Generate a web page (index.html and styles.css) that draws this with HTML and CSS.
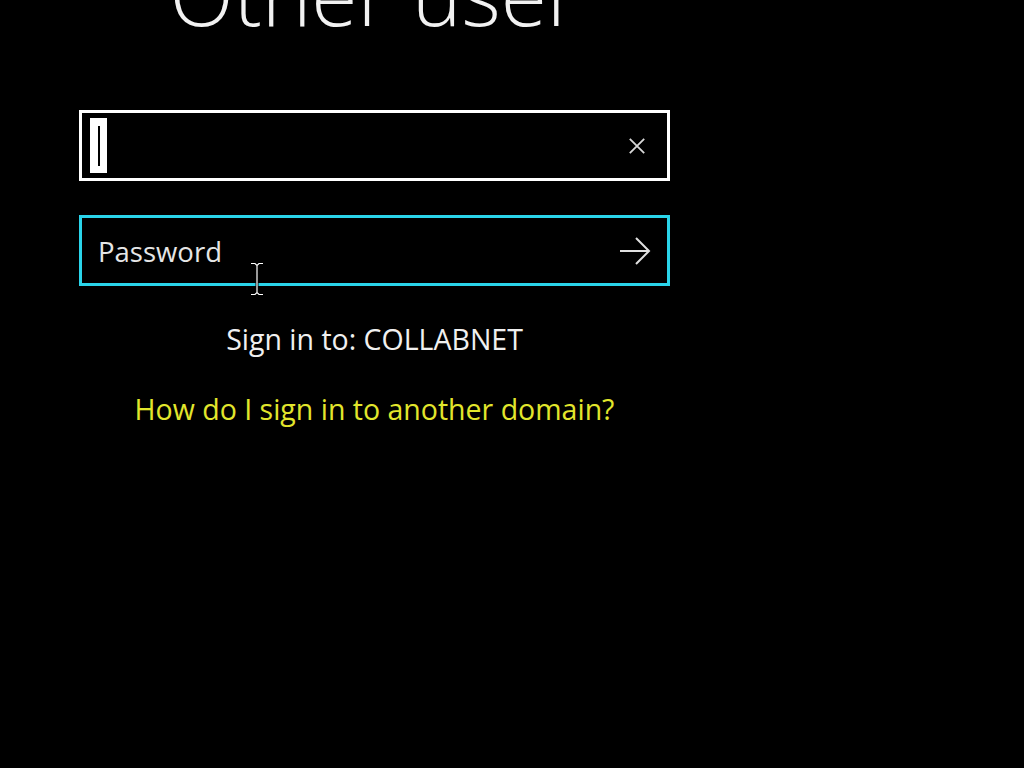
FILE: index.html
```html
<!DOCTYPE html>
<html lang="en">
<head>
  <meta charset="UTF-8" />
  <title>Other user</title>
  <link rel="stylesheet" href="styles.css">
</head>
<body>

  <div class="panel">
    <h1 class="title">Other user</h1>

    <div class="field user-field">
      <span class="caret"><span class="caret-line"></span></span>
      <svg class="clear-icon" width="20" height="20" viewBox="0 0 20 20">
        <path d="M2 2 L18 18 M18 2 L2 18" stroke="#d8d8d8" stroke-width="2" fill="none"/>
      </svg>
    </div>

    <div class="field pass-field">
      <span class="placeholder">Password</span>
      <svg class="submit-icon" width="32" height="30" viewBox="0 0 32 30">
        <path d="M1 15 L30 15 M17 2 L30 15 L17 28" stroke="#e0e0e0" stroke-width="2" fill="none"/>
      </svg>
    </div>

    <div class="domain">Sign in to: COLLABNET</div>
    <a class="help" href="#">How do I sign in to another domain?</a>
  </div>

  <svg class="mouse" width="16" height="34" viewBox="0 0 16 34">
    <path d="M2 1.5 H6 L8 3.5 L10 1.5 H14 M8 3.5 V30.5 M2 32.5 H6 L8 30.5 L10 32.5 H14" stroke="#000" stroke-width="3" fill="none"/>
    <path d="M2 1.5 H6 L8 3.5 L10 1.5 H14 M8 3.5 V30.5 M2 32.5 H6 L8 30.5 L10 32.5 H14" stroke="#fff" stroke-width="1.2" fill="none"/>
  </svg>

</body>
</html>
```

FILE: styles.css
```css
* {
  margin: 0;
  padding: 0;
  box-sizing: border-box;
}

body {
  background: #000;
  color: #fff;
  font-family: 'Open Sans', 'Noto Sans', sans-serif;
  width: 1024px;
  height: 768px;
  overflow: hidden;
  position: relative;
}

.panel {
  width: 591px;
  margin-left: 79px;
  display: flex;
  flex-direction: column;
  align-items: center;
}

.title {
  font-size: 84px;
  font-weight: 300;
  line-height: 84px;
  height: 84px;
  margin-top: -48px;
  margin-bottom: 74px;
  color: #f2f2f2;
  white-space: nowrap;
}

.field {
  width: 100%;
  height: 71px;
  border: 3px solid #fff;
  display: flex;
  align-items: center;
  justify-content: space-between;
  padding: 0 21px 0 8px;
}

.user-field {
  align-items: flex-start;
  padding-top: 5px;
}

.caret {
  width: 17px;
  height: 55px;
  background: #fff;
  display: flex;
  align-items: center;
  justify-content: center;
}

.caret-line {
  width: 2px;
  height: 40px;
  background: #000;
}

.clear-icon {
  width: 18px;
  height: 18px;
  margin-top: 19px;
}

.pass-field {
  margin-top: 34px;
  border-color: #2ad4ea;
  padding: 0 16px 0 16px;
}

.placeholder {
  font-size: 27.5px;
  color: #e6e6e6;
  margin-top: 2px;
}

.domain {
  margin-top: 33px;
  font-size: 28.5px;
  line-height: 40px;
  color: #f0f0f0;
}

.help {
  margin-top: 30px;
  font-size: 28.5px;
  line-height: 40px;
  color: #e2e62c;
  text-decoration: none;
}

.mouse {
  position: absolute;
  left: 249px;
  top: 262px;
}
```
